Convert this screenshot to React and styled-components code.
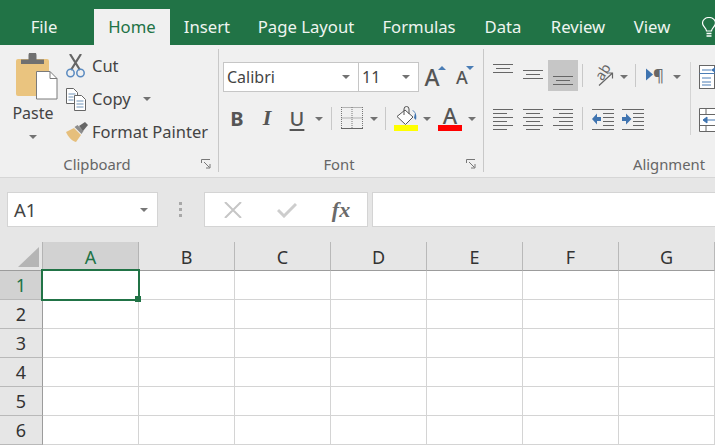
import styled, { createGlobalStyle } from "styled-components";

const GlobalStyle = createGlobalStyle`
  html, body {
    margin: 0;
    padding: 0;
    overflow: hidden;
    background: #fff;
  }
  * { box-sizing: border-box; }
`;

const Window = styled.div`
  width: 715px;
  height: 446px;
  overflow: hidden;
  font-family: "Noto Sans", "Open Sans", sans-serif;
  color: #444;
`;

/* title tabs */
const TabBar = styled.div`
  height: 45px;
  background: #217346;
  display: flex;
  align-items: flex-end;
`;

const Tab = styled.div`
  flex: none;
  width: ${(p) => p.$w}px;
  margin-right: ${(p) => p.$mr || 0}px;
  height: 36px;
  padding-bottom: 1px;
  display: flex;
  align-items: center;
  justify-content: center;
  font-size: 16.7px;
  color: ${(p) => (p.$active ? "#217346" : "#eef5f0")};
  background: ${(p) => (p.$active ? "#f0f0f0" : "transparent")};
`;

const BulbBox = styled.div`
  flex: none;
  height: 36px;
  padding-left: 18px;
  display: flex;
  align-items: center;
`;

/* ribbon */
const Ribbon = styled.div`
  height: 133px;
  background: #f0f0f0;
  border-bottom: 1px solid #d6d6d6;
  padding-top: 4px;
  display: flex;
  align-items: flex-start;
  overflow: hidden;
`;

const Group = styled.div`
  flex: none;
  width: ${(p) => p.$w}px;
  height: 123px;
  border-right: 1px solid #c8c8c8;
  display: flex;
  flex-direction: column;
`;

const GroupBody = styled.div`
  flex: 1;
  min-height: 0;
  padding-left: ${(p) => p.$pl || 0}px;
  display: flex;
`;

const GroupFoot = styled.div`
  height: 20px;
  padding-top: 4px;
  display: flex;
  align-items: center;
`;

const GroupLabel = styled.div`
  flex: 1;
  text-align: center;
  font-size: 14.8px;
  color: #666;
`;

const Launcher = styled.div`
  flex: none;
  width: 24px;
  display: flex;
  justify-content: center;
`;

const PasteButton = styled.div`
  flex: none;
  width: 46px;
  margin-right: 9px;
  padding-top: 4px;
  display: flex;
  flex-direction: column;
  align-items: center;
  font-size: 16px;
`;

const PasteLabel = styled.div`
  margin: 2px 0 11px;
  line-height: 22px;
`;

const SmallList = styled.div`
  display: flex;
  flex-direction: column;
`;

const SmallRow = styled.div`
  height: 33px;
  display: flex;
  align-items: center;
  font-size: 16.5px;
`;

const SmallIcon = styled.div`
  flex: none;
  width: 27px;
  display: flex;
`;

const Caret = styled.span`
  display: block;
  flex: none;
  width: 0;
  height: 0;
  border-left: 4px solid transparent;
  border-right: 4px solid transparent;
  border-top: 4.5px solid ${(p) => p.$color || "#727272"};
  margin-left: ${(p) => p.$ml || 0}px;
`;

const CaretBox = styled.div`
  flex: none;
  width: ${(p) => p.$w}px;
  display: flex;
  justify-content: center;
  padding-top: 2px;
`;

const Column = styled.div`
  flex: none;
  width: ${(p) => (p.$w ? `${p.$w}px` : "auto")};
  display: flex;
  flex-direction: column;
`;

const ToolRow = styled.div`
  display: flex;
  align-items: center;
  height: ${(p) => p.$h || 28}px;
  margin-top: ${(p) => p.$mt || 0}px;
  margin-left: ${(p) => p.$ml || 0}px;
`;

const Combo = styled.div`
  flex: none;
  width: ${(p) => p.$w}px;
  height: 30px;
  margin-left: ${(p) => p.$ml || 0}px;
  padding: 0 8px 0 3px;
  background: #fff;
  border: 1px solid #c6c6c6;
  display: flex;
  align-items: center;
  justify-content: space-between;
  font-size: 16px;
`;

const SizeButton = styled.div`
  flex: none;
  width: ${(p) => p.$w}px;
  margin-left: ${(p) => p.$ml || 0}px;
  display: flex;
  align-items: flex-start;
  justify-content: center;
`;

const SizeLetter = styled.span`
  font-size: ${(p) => p.$size}px;
  font-weight: 500;
  line-height: 32px;
  color: #555;
`;

const Pointer = styled.span`
  display: block;
  width: 0;
  height: 0;
  margin: 5px 0 0 -2px;
  border-left: 4px solid transparent;
  border-right: 4px solid transparent;
  ${(p) =>
    p.$down
      ? "border-top: 4.5px solid #4a7db5;"
      : "border-bottom: 4.5px solid #4a7db5;"}
`;

const ToolButton = styled.div`
  flex: none;
  width: ${(p) => p.$w || 30}px;
  height: 100%;
  display: flex;
  align-items: center;
  justify-content: center;
  background: ${(p) => (p.$active ? "#c6c6c6" : "transparent")};
`;

const StyleLetter = styled.span`
  font-family: ${(p) => (p.$serif ? '"Liberation Serif", serif' : '"Noto Sans", sans-serif')};
  font-size: ${(p) => p.$size || 20}px;
  font-weight: ${(p) => (p.$bold ? 700 : 500)};
  font-style: ${(p) => (p.$italic ? "italic" : "normal")};
  text-decoration: ${(p) => (p.$underline ? "underline" : "none")};
  text-decoration-thickness: 2px;
  text-underline-offset: 3px;
  color: #555;
`;

const ColorButton = styled.div`
  flex: none;
  width: ${(p) => p.$w}px;
  display: flex;
  flex-direction: column;
  align-items: center;
`;

const ColorLetter = styled.span`
  font-size: 22px;
  font-weight: 500;
  line-height: 20px;
  color: #555;
`;

const ColorBar = styled.span`
  display: block;
  width: 24px;
  height: 6px;
  background: ${(p) => p.$color};
`;

const ToolSep = styled.div`
  flex: none;
  width: 1px;
  height: 23px;
  margin: 0 ${(p) => p.$mr ?? 4}px 0 ${(p) => p.$ml ?? 5}px;
  background: #c8c8c8;
`;

const TallSep = styled.div`
  flex: none;
  width: 1px;
  height: 73px;
  margin: 13px 8px 0 0;
  background: #d4d4d4;
`;

const OverflowIcons = styled.div`
  flex: none;
  width: 60px;
  padding-top: 16px;
  display: flex;
  flex-direction: column;
  gap: 19px;
`;

/* formula bar */
const FormulaBar = styled.div`
  height: 64px;
  padding: 14px 0 0 7px;
  background: #e6e6e6;
  display: flex;
  align-items: flex-start;
`;

const NameBox = styled.div`
  flex: none;
  width: 151px;
  height: 35px;
  padding: 0 9px 0 6px;
  background: #fff;
  border: 1px solid #d4d4d4;
  display: flex;
  align-items: center;
  justify-content: space-between;
  font-size: 18.5px;
`;

const Grip = styled.div`
  flex: none;
  width: 44px;
  height: 35px;
  display: flex;
  flex-direction: column;
  align-items: center;
  justify-content: center;
  gap: 3px;
`;

const GripDot = styled.span`
  display: block;
  width: 3px;
  height: 3px;
  background: #a8a8a8;
`;

const FormulaTools = styled.div`
  flex: none;
  width: 164px;
  height: 35px;
  margin-left: 2px;
  background: #fff;
  border: 1px solid #d4d4d4;
  display: flex;
  align-items: center;
  padding-left: 1px;
`;

const FormulaTool = styled.div`
  flex: none;
  width: 54px;
  display: flex;
  justify-content: center;
  font-family: "Liberation Serif", serif;
  font-style: italic;
  font-weight: 700;
  font-size: 22px;
  line-height: 24px;
  color: #6a6a6a;
`;

const FormulaInput = styled.div`
  flex: 1;
  height: 35px;
  margin-left: 4px;
  background: #fff;
  border: 1px solid #d4d4d4;
  border-right: none;
`;

/* sheet */
const Sheet = styled.div`
  display: grid;
  grid-template-columns: 43px repeat(7, 96px);
  grid-template-rows: 29px repeat(6, 29px);
  background: #fff;
`;

const Corner = styled.div`
  background: #e6e6e6;
  border-right: 1px solid #b4b4b4;
  border-bottom: 1px solid #9c9c9c;
  padding: 5px 0 0 18px;
  display: flex;
`;

const ColHeader = styled.div`
  background: ${(p) => (p.$active ? "#d2d2d2" : "#e6e6e6")};
  color: ${(p) => (p.$active ? "#217346" : "#333")};
  border-right: 1px solid ${(p) => (p.$active ? "#b4b4b4" : "#b9b9b9")};
  border-bottom: 1px solid #9c9c9c;
  padding-top: 1px;
  display: flex;
  align-items: center;
  justify-content: center;
  font-size: 18px;
`;

const RowHeader = styled.div`
  background: ${(p) => (p.$active ? "#d2d2d2" : "#e6e6e6")};
  color: ${(p) => (p.$active ? "#217346" : "#333")};
  border-right: 1px solid #9c9c9c;
  border-bottom: 1px solid #b9b9b9;
  display: flex;
  align-items: center;
  justify-content: center;
  font-size: 18px;
`;

const Cell = styled.div`
  position: relative;
  border-right: 1px solid #d4d4d4;
  border-bottom: 1px solid #d4d4d4;
`;

const Selection = styled.div`
  position: absolute;
  left: -2px;
  top: -2px;
  width: 99px;
  height: 32px;
  border: 2px solid #217346;
  z-index: 2;
`;

const Handle = styled.div`
  position: absolute;
  right: -3px;
  bottom: -3px;
  width: 6px;
  height: 6px;
  background: #217346;
`;

/* drawings */
const PasteIcon = () => (
  <svg width="50" height="47" viewBox="-6 0 50 47">
    <rect x="2" y="6" width="33" height="37" rx="2" fill="#eac47f" />
    <path d="M7 11V6.500h7.500V2.500a3 3 0 0 1 8 0v4H30V11z" fill="#707070" />
    <path d="M22.500 18.500h13.500l7 7v20.500h-20.500z" fill="#fff" stroke="#7a7a7a" />
    <path d="M36 18.500v7h7" fill="none" stroke="#7a7a7a" />
  </svg>
);

const ScissorsIcon = () => (
  <svg width="22" height="24" viewBox="0 0 22 24">
    <path d="M5 0l10 16M16 0L6 16" stroke="#666" strokeWidth="2.200" fill="none" />
    <circle cx="5.500" cy="19" r="3.700" fill="none" stroke="#5a8ac0" strokeWidth="1.500" />
    <circle cx="15.500" cy="19" r="3.700" fill="none" stroke="#5a8ac0" strokeWidth="1.500" />
  </svg>
);

const CopyIcon = () => (
  <svg width="22" height="24" viewBox="0 0 22 24">
    <path d="M1.500 1.500h7l4 4v11h-11z" fill="#fff" stroke="#666" />
    <path d="M3.500 7h7M3.500 10h5M3.500 13h5" stroke="#6f93b8" />
    <path d="M9.500 8.500h7l4 4v11h-11z" fill="#fff" stroke="#666" />
    <path d="M11.500 14h7M11.500 17h7M11.500 20h7" stroke="#6f93b8" />
  </svg>
);

const PainterIcon = () => (
  <svg width="24" height="22" viewBox="0 0 24 22">
    <path d="M1 11l8-4 7 7-5 7c-4-1-8-5-10-10z" fill="#e6bf7c" />
    <path d="M9.500 6l3-2 6 6-2 3z" fill="#8c8c8c" />
    <path d="M14 5l6-4 3 3-5 6z" fill="#666" />
  </svg>
);

const LauncherIcon = () => (
  <svg width="10" height="10" viewBox="0 0 10 10">
    <path d="M.5 4V.5H9M3 3l5.500 5.500M5 9h4V5" fill="none" stroke="#777" />
  </svg>
);

const BordersIcon = () => (
  <svg width="22" height="22" viewBox="0 0 22 22">
    <path
      d="M.5.500h21M.5 11h21M.5 0v21M11 0v21M21.500 0v21"
      fill="none"
      stroke="#777"
      strokeDasharray="1 1"
    />
    <path d="M0 21.500h22" stroke="#666" />
  </svg>
);

const BucketIcon = () => (
  <svg width="24" height="19" viewBox="0 0 24 19">
    <path d="M11 4l8 7-7.500 7.500-8.500-8z" fill="#fff" stroke="#555" />
    <path d="M10 9V3a2.500 2.500 0 0 1 5 0v5" fill="none" stroke="#555" />
    <path d="M18 4c4 1 5 6 4 10l-2-2 1-5z" fill="#3f74b0" />
  </svg>
);

const LinesIcon = ({ w = 20, h = 31, lines }) => (
  <svg width={w} height={h} viewBox={`0 0 ${w} ${h}`}>
    {lines.map(([y, a, b]) => (
      <rect key={y} x={a} y={y} width={b - a} height="1" fill="#666" />
    ))}
  </svg>
);

const paragraph = (a, b) => [
  [6, 0, 20],
  [10, a, b],
  [14, 0, 20],
  [18, a, b],
  [22, 0, 20],
  [26, a, b],
];

const IndentIcon = ({ flip }) => (
  <svg width="22" height="31" viewBox="0 0 22 31">
    {[6, 26].map((y) => (
      <rect key={y} x="0" y={y} width="22" height="1" fill="#666" />
    ))}
    {[10, 14, 18, 22].map((y) => (
      <rect key={y} x="11" y={y} width="11" height="1" fill="#666" />
    ))}
    {flip ? (
      <path d="M0 14h4V10.500l5.500 5.500-5.500 5.500V18H0z" fill="#3f74b0" />
    ) : (
      <path d="M9 14H5V10.500L0 16l5 5.500V18h4z" fill="#3f74b0" />
    )}
  </svg>
);

const OrientationIcon = () => (
  <svg width="30" height="31" viewBox="-3 -2.500 30 31" overflow="visible">
    <text
      x="5"
      y="17"
      transform="rotate(-58 10 12)"
      fontFamily="Noto Sans, sans-serif"
      fontSize="14"
      fill="#666"
    >
      ab
    </text>
    <path d="M8 23L21 11M16 10.500h5.500v5.500" fill="none" stroke="#666" strokeWidth="1.200" />
  </svg>
);

const ParagraphIcon = () => (
  <svg width="22" height="31" viewBox="0 -5.500 22 31" overflow="visible">
    <path d="M0 3l7 6-7 6z" fill="#3f74b0" />
    <text x="7" y="15.500" fontFamily="Noto Sans, sans-serif" fontSize="17" fill="#666">
      ¶
    </text>
  </svg>
);

const WrapIcon = () => (
  <svg width="17" height="24" viewBox="0 0 17 24">
    <rect x=".5" y=".5" width="15" height="23" fill="#fff" stroke="#666" />
    <path d="M.5 8.500h15M3 5h9M3 13h9M3 17h9M3 20h9" stroke="#4a7db5" />
    <path d="M17 1.500L12 5l5 3.500z" fill="#3f74b0" />
  </svg>
);

const MergeIcon = () => (
  <svg width="17" height="24" viewBox="0 0 17 24">
    <path d="M.5.500h17v23H.5zM0 6.500h17M0 17.500h17M7 .5v6M7 17.500v6" fill="#fff" stroke="#666" />
    <path d="M17 12H5M8 9l-4 3 4 3z" fill="#3f74b0" stroke="#3f74b0" />
  </svg>
);

const BulbIcon = () => (
  <svg width="14" height="21" viewBox="0 0 14 21">
    <path
      d="M4.500 14c0-3-4-4.500-4-8a6.500 5.500 0 0 1 13 0c0 3.500-4 5-4 8z"
      fill="none"
      stroke="#fff"
      strokeWidth="1.200"
    />
    <path d="M4.500 16.500h5M4.500 19h5" stroke="#fff" strokeWidth="1.500" />
  </svg>
);

const CrossIcon = () => (
  <svg width="18" height="16" viewBox="0 0 18 16">
    <path d="M1 0l16 16M17 0L1 16" stroke="#c6c6c6" strokeWidth="2" />
  </svg>
);

const CheckIcon = () => (
  <svg width="20" height="16" viewBox="0 0 20 16">
    <path d="M1 8l6 6L19 2" fill="none" stroke="#cdcdcd" strokeWidth="3" />
  </svg>
);

const CornerIcon = () => (
  <svg width="21" height="20" viewBox="0 0 21 20">
    <path d="M21 0v20H0z" fill="#b5b5b5" />
  </svg>
);

const TABS = [
  { name: "File", w: 88, mr: 6 },
  { name: "Home", w: 76, active: true },
  { name: "Insert", w: 74 },
  { name: "Page Layout", w: 124 },
  { name: "Formulas", w: 102 },
  { name: "Data", w: 66 },
  { name: "Review", w: 84 },
  { name: "View", w: 64 },
];

const COLUMNS = ["A", "B", "C", "D", "E", "F", "G"];
const ROWS = [1, 2, 3, 4, 5, 6];

const App = () => {
  return (
    <Window>
      <GlobalStyle />
      <TabBar>
        {TABS.map((t) => (
          <Tab key={t.name} $w={t.w} $mr={t.mr} $active={t.active}>
            {t.name}
          </Tab>
        ))}
        <BulbBox>
          <BulbIcon />
        </BulbBox>
      </TabBar>

      <Ribbon>
        <Group $w={219}>
          <GroupBody $pl={10}>
            <PasteButton>
              <PasteIcon />
              <PasteLabel>Paste</PasteLabel>
              <Caret />
            </PasteButton>
            <SmallList>
              <SmallRow>
                <SmallIcon>
                  <ScissorsIcon />
                </SmallIcon>
                Cut
              </SmallRow>
              <SmallRow>
                <SmallIcon>
                  <CopyIcon />
                </SmallIcon>
                Copy
                <Caret $ml={12} />
              </SmallRow>
              <SmallRow>
                <SmallIcon>
                  <PainterIcon />
                </SmallIcon>
                Format Painter
              </SmallRow>
            </SmallList>
          </GroupBody>
          <GroupFoot>
            <GroupLabel>Clipboard</GroupLabel>
            <Launcher>
              <LauncherIcon />
            </Launcher>
          </GroupFoot>
        </Group>

        <Group $w={265}>
          <GroupBody $pl={4}>
            <Column>
              <ToolRow $h={30} $mt={13}>
                <Combo $w={136}>
                  Calibri
                  <Caret />
                </Combo>
                <Combo $w={61} $ml={-1}>
                  11
                  <Caret />
                </Combo>
                <SizeButton $w={30} $ml={1}>
                  <SizeLetter $size={23}>A</SizeLetter>
                  <Pointer />
                </SizeButton>
                <SizeButton $w={28} $ml={1}>
                  <SizeLetter $size={18}>A</SizeLetter>
                  <Pointer $down />
                </SizeButton>
              </ToolRow>
              <ToolRow $mt={12} $ml={-1}>
                <ToolButton>
                  <StyleLetter $bold>B</StyleLetter>
                </ToolButton>
                <ToolButton>
                  <StyleLetter $serif $italic $bold $size={22}>
                    I
                  </StyleLetter>
                </ToolButton>
                <ToolButton>
                  <StyleLetter $underline>U</StyleLetter>
                </ToolButton>
                <CaretBox $w={14}>
                  <Caret />
                </CaretBox>
                <ToolSep />
                <ToolButton $w={31}>
                  <BordersIcon />
                </ToolButton>
                <CaretBox $w={13}>
                  <Caret />
                </CaretBox>
                <ToolSep />
                <ColorButton $w={31}>
                  <BucketIcon />
                  <ColorBar $color="#ffff00" />
                </ColorButton>
                <CaretBox $w={12}>
                  <Caret />
                </CaretBox>
                <ColorButton $w={34}>
                  <ColorLetter>A</ColorLetter>
                  <ColorBar $color="#ff0000" />
                </ColorButton>
                <CaretBox $w={9}>
                  <Caret />
                </CaretBox>
              </ToolRow>
            </Column>
          </GroupBody>
          <GroupFoot>
            <GroupLabel>Font</GroupLabel>
            <Launcher>
              <LauncherIcon />
            </Launcher>
          </GroupFoot>
        </Group>

        <Group $w={395}>
          <GroupBody $pl={4}>
            <Column $w={202}>
              <ToolRow $h={31} $mt={11}>
                <ToolButton>
                  <LinesIcon lines={[[4, 0, 20], [8, 3, 17], [12, 0, 20]]} />
                </ToolButton>
                <ToolButton>
                  <LinesIcon lines={[[10, 0, 20], [14, 3, 17], [18, 0, 20]]} />
                </ToolButton>
                <ToolButton $active>
                  <LinesIcon lines={[[16, 0, 20], [20, 3, 17], [24, 0, 20]]} />
                </ToolButton>
                <ToolSep $ml={4} $mr={5} />
                <ToolButton>
                  <OrientationIcon />
                </ToolButton>
                <CaretBox $w={12}>
                  <Caret />
                </CaretBox>
                <ToolSep $mr={4} />
                <ToolButton $w={33}>
                  <ParagraphIcon />
                </ToolButton>
                <CaretBox $w={8}>
                  <Caret />
                </CaretBox>
              </ToolRow>
              <ToolRow $h={31} $mt={12}>
                <ToolButton>
                  <LinesIcon lines={paragraph(0, 14)} />
                </ToolButton>
                <ToolButton>
                  <LinesIcon lines={paragraph(3, 17)} />
                </ToolButton>
                <ToolButton>
                  <LinesIcon lines={paragraph(6, 20)} />
                </ToolButton>
                <ToolSep $ml={4} $mr={5} />
                <ToolButton>
                  <IndentIcon />
                </ToolButton>
                <ToolButton>
                  <IndentIcon flip />
                </ToolButton>
              </ToolRow>
            </Column>
            <TallSep />
            <OverflowIcons>
              <WrapIcon />
              <MergeIcon />
            </OverflowIcons>
          </GroupBody>
          <GroupFoot>
            <GroupLabel>Alignment</GroupLabel>
            <Launcher />
          </GroupFoot>
        </Group>
      </Ribbon>

      <FormulaBar>
        <NameBox>
          A1
          <Caret $color="#777" />
        </NameBox>
        <Grip>
          <GripDot />
          <GripDot />
          <GripDot />
        </Grip>
        <FormulaTools>
          <FormulaTool>
            <CrossIcon />
          </FormulaTool>
          <FormulaTool>
            <CheckIcon />
          </FormulaTool>
          <FormulaTool>fx</FormulaTool>
        </FormulaTools>
        <FormulaInput />
      </FormulaBar>

      <Sheet>
        <Corner>
          <CornerIcon />
        </Corner>
        {COLUMNS.map((c, i) => (
          <ColHeader key={c} $active={i === 0}>
            {c}
          </ColHeader>
        ))}
        {ROWS.map((r) => [
          <RowHeader key={`h${r}`} $active={r === 1}>
            {r}
          </RowHeader>,
          ...COLUMNS.map((c) => (
            <Cell key={`${c}${r}`}>
              {c === "A" && r === 1 && (
                <Selection>
                  <Handle />
                </Selection>
              )}
            </Cell>
          )),
        ])}
      </Sheet>
    </Window>
  );
};

export default App;
